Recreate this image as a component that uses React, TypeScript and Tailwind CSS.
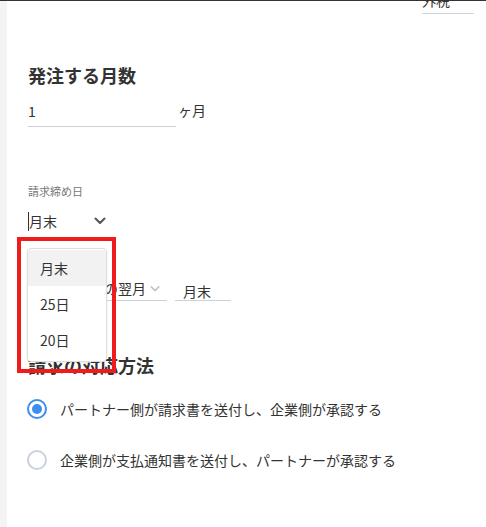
import React from 'react';

// Billing settings form with the closing-day select opened
const Chevron = ({ className }: { className?: string }) => (
    <svg className={className} width="12" height="8" viewBox="0 0 12 8" fill="none">
        <path d="M1.5 1.5L6 6L10.5 1.5" stroke="currentColor" strokeWidth="2" strokeLinecap="round" strokeLinejoin="round" />
    </svg>
);

const Radio = ({ checked, label }: { checked: boolean; label: string }) => (
    <label className="flex items-center gap-[13px] h-[20px]">
        <span
            className={`w-[20px] h-[20px] rounded-full border-2 flex items-center justify-center ${checked ? 'border-[#3d8ef0]' : 'border-[#c9d1dd]'}`}
        >
            {checked && <span className="w-[10px] h-[10px] rounded-full bg-[#3d8ef0]" />}
        </span>
        <span className="text-[14px] leading-[20px] text-[#333]">{label}</span>
    </label>
);

export default function App() {
    const options = ['月末', '25日', '20日'];

    return (
        <div
            className="flex min-h-[527px] bg-white border-t border-[#333] text-[#333]"
            style={{ fontFamily: '"Noto Sans CJK JP", "Noto Sans", sans-serif' }}
        >
            <div className="w-[7px] shrink-0 bg-[#f4f4f4]" />

            <div className="relative flex-1 pl-[21px]">
                {/* tax select, scrolled mostly out of view */}
                <div className="flex justify-end pr-[12px]">
                    <div className="w-[52px] h-[13px] border-b border-[#cfd0d8] flex items-start gap-[6px] overflow-hidden">
                        <span className="text-[14px] leading-[14px] -mt-[8px]">外税</span>
                        <Chevron className="w-[8px] -mt-[6px] text-[#bbb]" />
                    </div>
                </div>

                <h2 className="mt-[48px] text-[18px] leading-[26px] font-bold">発注する月数</h2>
                <div className="mt-[9px] flex">
                    <div className="w-[148px] h-[30px] border-b border-[#cfd0d8] flex items-center text-[14px]">1</div>
                    <span className="ml-[2px] mt-[3px] text-[14px] leading-[20px]">ヶ月</span>
                </div>

                <div className="mt-[56px] text-[11px] leading-[16px] text-[#777]">請求締め日</div>
                <div className="mt-[12px] flex items-center w-[78px] h-[20px]">
                    <span className="w-px h-[19px] bg-[#333]" />
                    <span className="text-[14px] leading-[20px]">月末</span>
                    <Chevron className="ml-auto text-[#555]" />
                </div>

                <div className="mt-[14px] text-[11px] leading-[16px] text-[#777]">支払期日</div>
                <div className="mt-[16px] flex gap-[8px]">
                    <div className="w-[139px] h-[24px] border-b border-[#cfd0d8] flex items-start gap-[4px] pl-[6px] pt-[1px]">
                        <span className="text-[14px] leading-[20px] whitespace-nowrap">請求締め月の翌月</span>
                        <Chevron className="mt-[7px] w-[10px] text-[#c4c4c4]" />
                    </div>
                    <div className="w-[56px] h-[24px] border-b border-[#cfd0d8] pl-[8px] pt-[1px]">
                        <span className="text-[14px] leading-[20px]">月末</span>
                    </div>
                </div>

                <h2 className="mt-[51px] text-[18px] leading-[26px] font-bold">請求の対応方法</h2>
                <div className="mt-[21px] -ml-px">
                    <Radio checked label="パートナー側が請求書を送付し、企業側が承認する" />
                </div>
                <div className="mt-[31px] -ml-px">
                    <Radio checked={false} label="企業側が支払通知書を送付し、パートナーが承認する" />
                </div>

                {/* open dropdown */}
                <div className="absolute left-[20px] top-[247px] w-[80px] h-[114px] bg-white border border-[#dedede] rounded-[4px] shadow-[0_1px_3px_rgba(0,0,0,0.08)] pt-px">
                    {options.map((o, i) => (
                        <div
                            key={o}
                            className={`h-[36px] flex items-center pl-[12px] text-[14px] ${i === 0 ? 'bg-[#f2f2f2]' : ''}`}
                        >
                            {o}
                        </div>
                    ))}
                </div>

                {/* annotation frame */}
                <div className="absolute left-[10px] top-[236px] w-[99px] h-[136px] border-[4px] border-[#ee1c1c]" />
            </div>
        </div>
    );
}
